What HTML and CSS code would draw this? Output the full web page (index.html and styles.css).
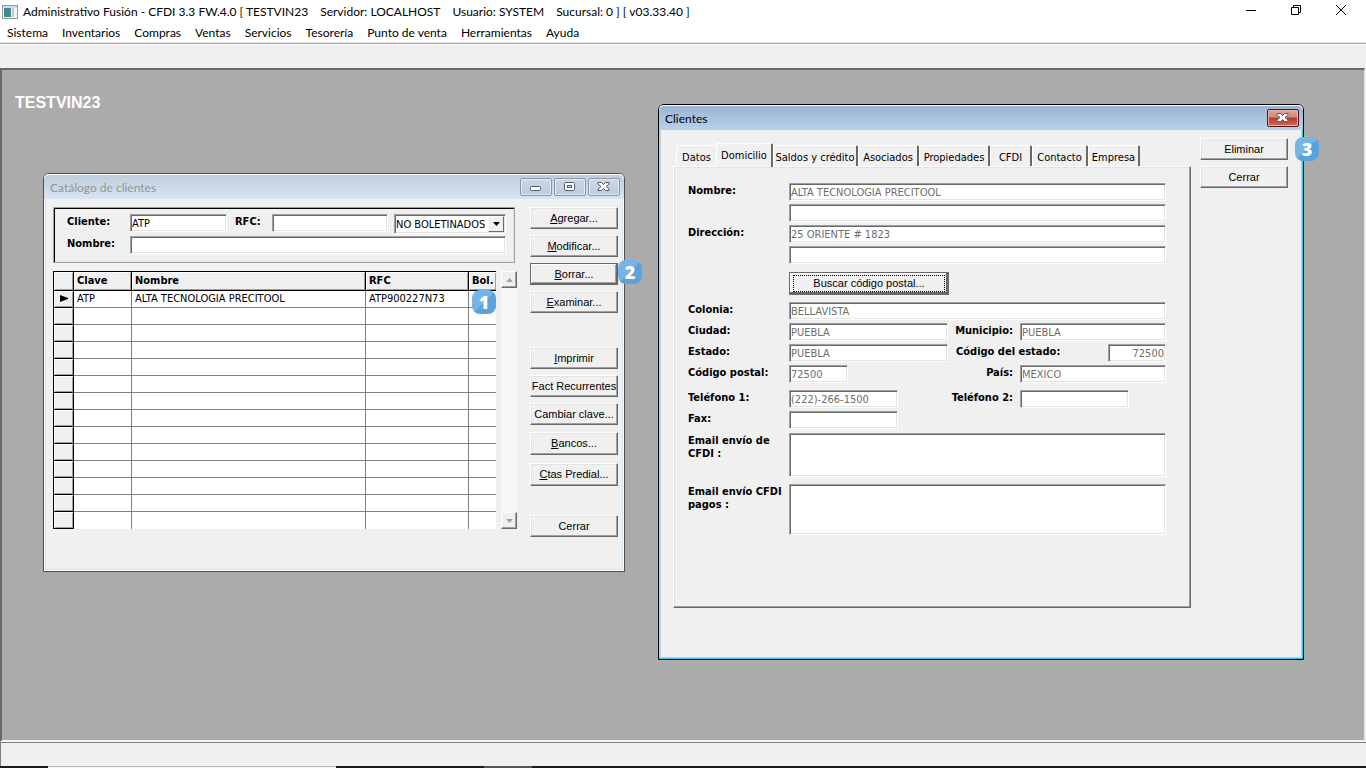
FILE: index.html
```html
<!DOCTYPE html>
<html lang="es">
<head>
<meta charset="utf-8">
<title>Administrativo Fusión</title>
<link rel="stylesheet" href="styles.css">
</head>
<body>
<header class="titlebar">
  <svg class="app-icon" width="16" height="14" viewBox="0 0 16 14"><rect x=".5" y=".5" width="15" height="13" fill="#f4f4f4" stroke="#9a9a9a"/><rect x="1" y="1" width="14" height="2" fill="#d5dbe0"/><defs><linearGradient id="g" x1="0" y1="0" x2="1" y2="1"><stop offset="0" stop-color="#3f7fb5"/><stop offset="1" stop-color="#3f9a62"/></linearGradient></defs><rect x="2" y="3" width="7" height="9" fill="url(#g)"/><rect x="10" y="3" width="2" height="9" fill="#c4cad0"/></svg>
  <h1 class="app-title"><span>Administrativo Fusión - CFDI 3.3 FW.4.0 [ TESTVIN23</span><span>Servidor: LOCALHOST</span><span>Usuario: SYSTEM</span><span>Sucursal: 0 ] [ v03.33.40 ]</span></h1>
  <div class="sys">
    <button class="sys-btn" aria-label="Minimizar"><svg width="12" height="12" viewBox="0 0 12 12"><path d="M1 6.500h10" stroke="#000"/></svg></button>
    <button class="sys-btn" aria-label="Restaurar"><svg width="12" height="12" viewBox="0 0 12 12"><path d="M1.500 3.500h7v7h-7zM3.500 3V1.500h7v7H9" fill="none" stroke="#000"/></svg></button>
    <button class="sys-btn" aria-label="Cerrar aplicación"><svg width="12" height="12" viewBox="0 0 12 12"><path d="M1 1l10 10M11 1L1 11" stroke="#000"/></svg></button>
  </div>
</header>
<nav class="menubar">
  <a href="#">Sistema</a><a href="#">Inventarios</a><a href="#">Compras</a><a href="#">Ventas</a><a href="#">Servicios</a><a href="#">Tesorería</a><a href="#">Punto de venta</a><a href="#">Herramientas</a><a href="#">Ayuda</a>
</nav>
<div class="toolbar"></div>
<main class="desktop">
  <p class="company">TESTVIN23</p>

  <section class="window catalog">
    <header class="win-title">
      <h2>Catálogo de clientes</h2>
      <div class="win-controls">
        <button aria-label="Minimizar ventana"><svg width="14" height="12" viewBox="0 0 14 12"><rect x="1.500" y="5.500" width="10" height="4" rx="1" fill="#fff" stroke="#555b6e"/></svg></button>
        <button aria-label="Maximizar ventana"><svg width="14" height="12" viewBox="0 0 14 12"><rect x="1.500" y="1.500" width="10" height="8" rx="1" fill="#fff" stroke="#555b6e"/><rect x="4.500" y="4.500" width="4" height="2" fill="#d3dfec" stroke="#555b6e"/></svg></button>
        <button aria-label="Cerrar ventana"><svg width="14" height="12" viewBox="0 0 14 12"><path d="M1 1.500h3.500L6.500 3.500l2-2H12v1.500L9 5.500 12 8v1.500H8.500l-2-2-2 2H1V8l3-2.500L1 3z" fill="#fff" stroke="#555b6e"/></svg></button>
      </div>
    </header>
    <div class="catalog-body">
      <div class="catalog-main">
        <form class="filter">
          <label for="f-cli">Cliente:</label>
          <input id="f-cli" class="field" value="ATP">
          <label for="f-rfc">RFC:</label>
          <input id="f-rfc" class="field">
          <div class="combo"><select class="field" aria-label="Boletinados"><option>NO BOLETINADOS</option></select><span class="combo-arrow"><svg width="7" height="4" viewBox="0 0 7 4"><path d="M0 0h7L3.500 4z"/></svg></span></div>
          <label for="f-nom">Nombre:</label>
          <input id="f-nom" class="field wide">
        </form>
        <div class="grid-area">
          <table class="grid">
            <colgroup><col class="c-sel"><col class="c-clave"><col><col class="c-rfc"><col class="c-bol"></colgroup>
            <thead><tr><th></th><th>Clave</th><th>Nombre</th><th>RFC</th><th>Bol.</th></tr></thead>
            <tbody>
              <tr><th><svg width="9" height="7" viewBox="0 0 9 7"><path d="M1 0l8 3v1L1 7z"/></svg></th><td>ATP</td><td>ALTA TECNOLOGIA PRECITOOL</td><td>ATP900227N73</td><td></td></tr>
              <tr><th></th><td></td><td></td><td></td><td></td></tr>
              <tr><th></th><td></td><td></td><td></td><td></td></tr>
              <tr><th></th><td></td><td></td><td></td><td></td></tr>
              <tr><th></th><td></td><td></td><td></td><td></td></tr>
              <tr><th></th><td></td><td></td><td></td><td></td></tr>
              <tr><th></th><td></td><td></td><td></td><td></td></tr>
              <tr><th></th><td></td><td></td><td></td><td></td></tr>
              <tr><th></th><td></td><td></td><td></td><td></td></tr>
              <tr><th></th><td></td><td></td><td></td><td></td></tr>
              <tr><th></th><td></td><td></td><td></td><td></td></tr>
              <tr><th></th><td></td><td></td><td></td><td></td></tr>
              <tr><th></th><td></td><td></td><td></td><td></td></tr>
              <tr><th></th><td></td><td></td><td></td><td></td></tr>
            </tbody>
          </table>
          <div class="scroll">
            <button class="scroll-btn" aria-label="Subir"><svg width="7" height="4" viewBox="0 0 7 4"><path d="M3.500 0L7 4H0z" fill="#a0a0a0"/></svg></button>
            <button class="scroll-btn" aria-label="Bajar"><svg width="7" height="4" viewBox="0 0 7 4"><path d="M0 0h7L3.500 4z" fill="#a0a0a0"/></svg></button>
          </div>
        </div>
      </div>
      <div class="actions">
        <button class="btn"><u>A</u>gregar...</button>
        <button class="btn"><u>M</u>odificar...</button>
        <button class="btn default"><u>B</u>orrar...</button>
        <button class="btn"><u>E</u>xaminar...</button>
        <button class="btn print"><u>I</u>mprimir</button>
        <button class="btn">Fact Recurrentes</button>
        <button class="btn">Cambiar clave...</button>
        <button class="btn tall"><u>B</u>ancos...</button>
        <button class="btn tall spaced"><u>C</u>tas Predial...</button>
        <button class="btn close">Cerrar</button>
      </div>
    </div>
  </section>

  <section class="window client">
    <header class="win-title">
      <h2>Clientes</h2>
      <div class="win-controls">
        <button class="red" aria-label="Cerrar Clientes"><svg width="14" height="12" viewBox="0 0 14 12"><path d="M1 1.500h3.500L6.500 3.500l2-2H12v1.500L9 5.500 12 8v1.500H8.500l-2-2-2 2H1V8l3-2.500L1 3z" fill="#fff" stroke="#555b6e"/></svg></button>
      </div>
    </header>
    <div class="client-body">
      <div class="tabs-area">
        <div class="tabs" role="tablist">
          <button class="tab t-datos" role="tab">Datos</button>
          <button class="tab t-dom active" role="tab" aria-selected="true">Domicilio</button>
          <button class="tab t-saldos" role="tab">Saldos y crédito</button>
          <button class="tab t-asoc" role="tab">Asociados</button>
          <button class="tab t-prop" role="tab">Propiedades</button>
          <button class="tab t-cfdi" role="tab">CFDI</button>
          <button class="tab t-cont" role="tab">Contacto</button>
          <button class="tab t-emp" role="tab">Empresa</button>
        </div>
        <form class="panel">
          <div class="rows">
            <div class="row"><label for="nom">Nombre:</label><input id="nom" class="field" value="ALTA TECNOLOGIA PRECITOOL"></div>
            <div class="row"><span></span><input class="field" aria-label="Nombre 2"></div>
            <div class="row"><label for="dir">Dirección:</label><input id="dir" class="field" value="25 ORIENTE # 1823"></div>
            <div class="row"><span></span><input class="field" aria-label="Dirección 2"></div>
          </div>
          <div class="row search"><span></span><button type="button" class="btn focus"><span>Buscar código postal...</span></button></div>
          <div class="rows">
            <div class="row"><label for="col">Colonia:</label><input id="col" class="field" value="BELLAVISTA"></div>
            <div class="row four"><label for="ciu">Ciudad:</label><input id="ciu" class="field" value="PUEBLA"><label for="mun">Municipio:</label><input id="mun" class="field" value="PUEBLA"></div>
            <div class="row state"><label for="est">Estado:</label><input id="est" class="field" value="PUEBLA"><label for="cod">Código del estado:</label><input id="cod" class="field num" value="72500"></div>
            <div class="row four"><label for="cp">Código postal:</label><input id="cp" class="field short" value="72500"><label for="pais">País:</label><input id="pais" class="field" value="MEXICO"></div>
          </div>
          <div class="rows phones">
            <div class="row four"><label for="tel1">Teléfono 1:</label><input id="tel1" class="field phone" value="(222)-266-1500"><label for="tel2">Teléfono 2:</label><input id="tel2" class="field phone"></div>
            <div class="row four"><label for="fax">Fax:</label><input id="fax" class="field phone"></div>
          </div>
          <div class="row mail"><label for="m1">Email envío de<br>CFDI :</label><textarea id="m1" class="field"></textarea></div>
          <div class="row mail pay"><label for="m2">Email envío CFDI<br>pagos :</label><textarea id="m2" class="field"></textarea></div>
        </form>
      </div>
      <div class="side">
        <button class="btn">Eliminar</button>
        <button class="btn">Cerrar</button>
      </div>
    </div>
  </section>

  <span class="badge b1">1</span>
  <span class="badge b2">2</span>
  <span class="badge b3">3</span>
</main>
<footer class="status"></footer>
<div class="taskbar"><span class="task-search"></span><span class="task-item"></span></div>
</body>
</html>
```
FILE: styles.css
```css
* { box-sizing: border-box; }
body {
  margin: 0;
  height: 100vh;
  display: flex;
  flex-direction: column;
  overflow: hidden;
  background: #f0f0f0;
  color: #000;
  font: 12px/16px Lato, "Noto Sans", sans-serif;
}
button, input, select, textarea { font: inherit; color: inherit; margin: 0; border-radius: 0; }
h1, h2, p { margin: 0; font-size: 12px; font-weight: 400; }
svg { display: block; }

.titlebar { display: flex; align-items: center; height: 23px; padding-left: 2px; background: #fff; }
.app-title { display: flex; gap: 12px; flex: 1; margin-left: 5px; white-space: nowrap; }
.sys { display: flex; align-self: flex-start; margin-right: 3px; }
.sys-btn { width: 45px; height: 20px; padding: 0; border: 0; background: none; display: flex; align-items: center; justify-content: center; }

.menubar { display: flex; gap: 14px; height: 20px; padding: 2px 7px; background: #fff; border-bottom: 1px solid #f0f0f0; }
.menubar a { color: #000; text-decoration: none; white-space: nowrap; }
.toolbar { height: 25px; border-top: 1px solid #a0a0a0; box-shadow: inset 0 1px #fff; }

.desktop {
  position: relative;
  flex: 1;
  margin-right: 1px;
  background: #ababab;
  border: 2px solid;
  border-color: #696969 #e3e3e3 #f4f4f4 #696969;
  border-right-width: 1px;
}
.company { padding: 23px 13px; font: bold 16px/20px "Liberation Sans", Arial, sans-serif; color: #fff; }

.window {
  position: absolute;
  display: flex;
  flex-direction: column;
  border: 1px solid #4d4d4d;
  border-radius: 6px 6px 0 0;
  background: #f0f0f0;
  font: 11px/13px "DejaVu Sans Condensed", "DejaVu Sans", sans-serif;
}
.catalog { left: 41px; top: 103px; width: 582px; height: 399px; }
.client { left: 656px; top: 34px; width: 646px; height: 556px; border-color: #000; }
.catalog { box-shadow: inset 0 0 0 1px #fff, inset 0 0 0 2px #d7e4f2; }
.client { box-shadow: inset -1px -1px #2cc5ee, inset 0 0 0 2px #b9d1ea; }
.win-title { display: flex; justify-content: space-between; height: 25px; padding: 4px 4px 0 6px; border-radius: 5px 5px 0 0; }
.win-title h2 { font: 12px/20px Lato, "Noto Sans", sans-serif; }
.catalog .win-title { background: linear-gradient(#bfcddb, #d7e4f2); box-shadow: inset 0 1px #fff; }
.catalog h2 { color: #8f959c; }
.client .win-title { background: linear-gradient(#99b4d1, #b9d1ea); box-shadow: inset 0 1px #fff; }
.win-controls { display: flex; gap: 2px; }
.win-controls button {
  display: flex; align-items: center; justify-content: center;
  width: 32px; height: 18px; padding: 0;
  border: 1px solid #8a96a8; border-radius: 2px;
  background: linear-gradient(#cbd8e6, #bccbdb);
  box-shadow: inset 0 0 0 1px #e0eaf4;
}
.win-controls .red {
  border-color: #4d1520;
  background: linear-gradient(#e3a396 0, #d4857a 45%, #b53b25 50%, #d06a55);
  box-shadow: inset 0 0 0 1px #eab6ac;
}

.field {
  width: 100%; min-width: 0; height: 18px;
  padding: 2px 1px 1px;
  background: #fff;
  border: 1px solid;
  border-color: #a0a0a0 #fff #fff #a0a0a0;
  box-shadow: inset 1px 1px #696969, inset -1px -1px #e3e3e3;
  outline: 0; resize: none;
  line-height: 13px;
}
.btn {
  height: 22px; padding: 0;
  background: #f0f0f0;
  border: 1px solid;
  border-color: #fff #696969 #696969 #fff;
  box-shadow: inset -1px -1px #a0a0a0, inset 1px 1px #e3e3e3;
  font: 11px/13px "Liberation Sans", Arial, sans-serif;
  white-space: nowrap;
}
.btn.default { border-color: #696969; box-shadow: inset -1px -1px #696969, inset 1px 1px #fff, inset -2px -2px #a0a0a0; }
.btn.tall { height: 23px; }

.catalog-body { display: flex; flex: 1; padding: 8px 6px 0 9px; }
.catalog-main { flex: 1; min-width: 0; }
.filter {
  display: grid;
  grid-template-columns: 63px 97px 45px 116px 118px;
  row-gap: 4px;
  align-content: start;
  width: 462px; height: 56px;
  padding: 6px 0 0 13px;
  border: 1px solid #a0a0a0;
  box-shadow: inset 1px 1px #000, inset -1px -1px #e3e3e3;
}
.filter label, .row label { font-weight: bold; line-height: 16px; white-space: nowrap; }
.filter label + .field { align-self: start; }
.filter .wide { grid-column: 2 / 6; }
.filter > label:nth-of-type(2) { padding-left: 8px; }
.combo { position: relative; margin-left: 6px; margin-bottom: -2px; height: 20px; }
.combo select { appearance: none; height: 20px; }
.combo-arrow {
  position: absolute; top: 2px; right: 2px; bottom: 2px; width: 16px;
  display: flex; align-items: center; justify-content: center;
  background: #f0f0f0; border: 1px solid; border-color: #fff #696969 #696969 #fff;
  pointer-events: none;
}

.grid-area { display: flex; gap: 5px; margin-top: 8px; }
.grid { width: 443px; border-spacing: 0; table-layout: fixed; border-left: 1px solid #000; border-top: 1px solid #000; background: #fff; }
.c-sel { width: 20px; }
.c-clave { width: 58px; }
.c-rfc { width: 103px; }
.c-bol { width: 27px; }
.grid th, .grid td { height: 17px; padding: 1px 0 0 3px; line-height: 13px; text-align: left; vertical-align: top; white-space: nowrap; border: 0 solid #808080; border-width: 0 1px 1px 0; }
.grid th { background: #f0f0f0; border-color: #000; box-shadow: inset 1px 1px #fff, inset -1px -1px #a0a0a0; }
.grid thead th { height: 19px; padding-top: 2px; }
.grid tbody th { padding: 4px 0 0 5px; }
.grid tr > :last-child { border-right: 0; }
.grid tbody tr:last-child > td { border-bottom: 0; }
.scroll { display: flex; flex-direction: column; justify-content: space-between; width: 16px; background: repeating-conic-gradient(#fff 0 25%, #f0f0f0 0 50%) 0 0 / 2px 2px; }
.scroll-btn { display: flex; align-items: center; justify-content: center; height: 17px; padding: 0; background: #f0f0f0; border: 1px solid; border-color: #fff #696969 #696969 #fff; box-shadow: inset -1px -1px #a0a0a0; }

.actions { display: flex; flex-direction: column; gap: 6px; width: 88px; }
.actions .print { margin-top: 28px; }
.actions .tall { margin-top: 1px; }
.actions .spaced { margin-top: 2px; }
.actions .close { margin-top: 23px; }

.client-body { display: flex; justify-content: space-between; flex: 1; padding: 8px 15px 51px 14px; }
.tabs-area { display: flex; flex-direction: column; width: 518px; padding-top: 5px; }
.tabs { display: flex; align-items: flex-end; height: 23px; padding-left: 3px; }
.tab {
  height: 21px; padding: 2px 0 0;
  background: #f0f0f0;
  border: 0 solid; border-width: 1px 2px 0 1px;
  border-color: #fff #696969 #fff #fff;
  border-radius: 2px 2px 0 0;
  white-space: nowrap;
  font: 11px/13px "DejaVu Sans Condensed", sans-serif;
}
.tab.active { z-index: 1; height: 24px; margin-bottom: -1px; padding: 0; }
.t-datos { width: 40px; border-right-width: 0; }
.t-dom { width: 57px; }
.t-saldos { width: 85px; }
.t-asoc { width: 61px; }
.t-prop { width: 71px; }
.t-cfdi { width: 42px; }
.t-cont { width: 56px; }
.t-emp { width: 52px; }

.panel {
  flex: 1;
  padding: 16px 24px 0 14px;
  border: 1px solid; border-color: #fff #696969 #696969 #fff;
  box-shadow: inset -1px -1px #a0a0a0, inset 1px 1px #e3e3e3;
}
.panel .field { color: #6d6d6d; }
.rows { display: flex; flex-direction: column; gap: 3px; }
.row { display: grid; grid-template-columns: 101px 1fr; }
.row.search { margin: 8px 0 7px; }
.btn.focus { width: 160px; height: 23px; padding: 2px 3px; border-color: #696969; box-shadow: inset -2px -2px #696969, inset 1px 1px #fff; }
.btn.focus span { display: block; border: 1px dotted #000; line-height: 15px; }
.row.four { grid-template-columns: 101px 159px 72px 1fr; }
.row.four label + .field + label { text-align: right; padding-right: 7px; }
.row.state { grid-template-columns: 101px 159px 1fr 58px; }
.row.state label + .field + label { padding-left: 8px; }
.num { text-align: right; }
.field.short { width: 59px; }
.field.phone { width: 109px; }
.phones { margin: 7px 0 4px; }
.row.mail label { line-height: 13px; padding-top: 1px; }
.mail .field { height: 44px; }
.pay { margin-top: 7px; }
.pay .field { height: 51px; }
.side { display: flex; flex-direction: column; gap: 6px; width: 88px; }

.badge {
  position: absolute; width: 24px; height: 24px; border-radius: 8px;
  background: linear-gradient(135deg, #76b4e6 50%, #5aa2dc 50%);
  color: #fff; font: 800 18px/24px "Open Sans", sans-serif; text-align: center;
}
.b1 { left: 470px; top: 220px; }
.b2 { left: 616px; top: 190px; }
.b3 { left: 1293px; top: 67px; }

.status { height: 24px; border-top: 1px solid #808080; border-left: 1px solid #808080; }
.taskbar { display: flex; height: 2px; background: #1c1a1d; padding-left: 48px; }
.task-search { width: 288px; background: #f2f2f2; border-top: 1px solid #bbb; }
.task-item { width: 48px; margin-left: 148px; background: #555; }
```
